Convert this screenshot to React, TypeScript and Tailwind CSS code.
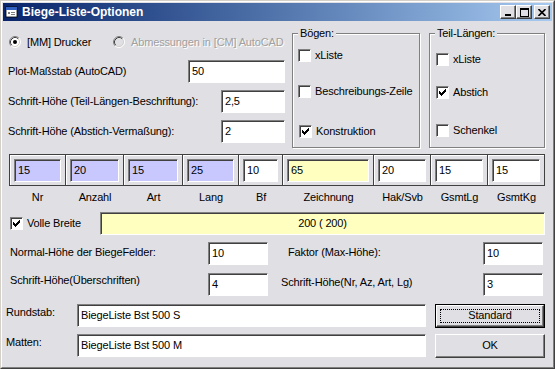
import React from "react";

const raised =
  "border border-t-white border-l-white border-r-[#404040] border-b-[#404040] shadow-[inset_-1px_-1px_0_#808080]";
const sunken =
  "border border-t-[#808080] border-l-[#808080] border-r-white border-b-white shadow-[inset_1px_1px_0_#404040]";

const checkPixels = [
  [6, 0], [5, 1], [6, 1], [0, 2], [4, 2], [5, 2], [6, 2], [0, 3], [1, 3], [3, 3], [4, 3], [5, 3],
  [0, 4], [1, 4], [2, 4], [3, 4], [4, 4], [1, 5], [2, 5], [3, 5], [2, 6],
];

function CheckBox({ checked }: { checked?: boolean }) {
  return (
    <span className={`flex h-[13px] w-[13px] shrink-0 items-center justify-center bg-white ${sunken}`}>
      {checked && (
        <svg width="7" height="7" viewBox="0 0 7 7" shapeRendering="crispEdges">
          {checkPixels.map(([x, y]) => (
            <rect key={`${x}-${y}`} x={x} y={y} width="1" height="1" fill="#000" />
          ))}
        </svg>
      )}
    </span>
  );
}

function Check({ label, checked }: { label: string; checked?: boolean }) {
  return (
    <div className="flex h-[13px] items-center gap-[4px] whitespace-nowrap">
      <CheckBox checked={checked} />
      <span>{label}</span>
    </div>
  );
}

function Radio({ checked, disabled }: { checked?: boolean; disabled?: boolean }) {
  return (
    <svg width="12" height="12" viewBox="0 0 12 12" className="shrink-0">
      <circle cx="6" cy="6" r="5" fill={disabled ? "#e0dfe3" : "#fff"} />
      <path d="M2.11 9.89 A5.5 5.5 0 0 1 9.89 2.11" stroke="#808080" fill="none" />
      <path d="M9.89 2.11 A5.5 5.5 0 0 1 2.11 9.89" stroke="#fff" fill="none" />
      <path d="M2.82 9.18 A4.5 4.5 0 0 1 9.18 2.82" stroke="#404040" fill="none" />
      <path d="M9.18 2.82 A4.5 4.5 0 0 1 2.82 9.18" stroke="#d4d0c8" fill="none" />
      {checked && <circle cx="6" cy="6" r="2" fill="#000" />}
    </svg>
  );
}

function Field({ value, className }: { value: string; className: string }) {
  return (
    <div className={`flex h-[23px] shrink-0 items-center pl-[3px] ${sunken} ${className}`}>{value}</div>
  );
}

function Group({ title, className, children }: { title: string; className: string; children: React.ReactNode }) {
  return (
    <div
      className={`relative h-[115px] border border-[#808080] shadow-[inset_1px_1px_0_#fff,1px_1px_0_#fff] ${className}`}
    >
      <span className="absolute -top-[8px] left-[5px] bg-[#e0dfe3] px-[2px] leading-[14px]">{title}</span>
      {children}
    </div>
  );
}

const cells = [
  { label: "Nr", value: "15", w: "w-[57px]", bg: "bg-[#c8c8ff]" },
  { label: "Anzahl", value: "20", w: "w-[58px]", bg: "bg-[#c8c8ff]" },
  { label: "Art", value: "15", w: "w-[59px]", bg: "bg-[#c8c8ff]" },
  { label: "Lang", value: "25", w: "w-[56px]", bg: "bg-[#c8c8ff]" },
  { label: "Bf", value: "10", w: "w-[44px]", bg: "bg-white" },
  { label: "Zeichnung", value: "65", w: "w-[91px]", bg: "bg-[#ffffc0]" },
  { label: "Hak/Svb", value: "20", w: "w-[57px]", bg: "bg-white" },
  { label: "GsmtLg", value: "15", w: "w-[57px]", bg: "bg-white" },
  { label: "GsmtKg", value: "15", w: "w-[57px]", bg: "bg-white" },
];

function TitleButton({ children }: { children: React.ReactNode }) {
  return (
    <div className={`flex h-[14px] w-[16px] items-center justify-center bg-[#e0dfe3] ${raised}`}>{children}</div>
  );
}

function TitleBar() {
  return (
    <div className="flex h-[18px] shrink-0 items-center bg-gradient-to-r from-[#0a246a] to-[#a6caf0] pl-[2px] pr-[2px]">
      <svg width="14" height="14" viewBox="0 0 14 14" className="shrink-0">
        <rect x="1" y="2" width="11" height="10" fill="#fff" stroke="#000" strokeWidth="0.8" />
        <rect x="1" y="2" width="11" height="3" fill="#3060c0" />
        <rect x="3" y="7" width="2" height="2" fill="#808080" />
        <rect x="6" y="7" width="4" height="1" fill="#808080" />
        <rect x="6" y="9" width="4" height="1" fill="#808080" />
      </svg>
      <span className="ml-[3px] text-[12px] font-bold tracking-normal text-white">Biege-Liste-Optionen</span>
      <div className="ml-auto flex items-center">
        <TitleButton>
          <svg width="8" height="8" viewBox="0 0 8 8" shapeRendering="crispEdges">
            <rect x="1" y="6" width="6" height="2" fill="#000" />
          </svg>
        </TitleButton>
        <TitleButton>
          <svg width="9" height="9" viewBox="0 0 9 9" shapeRendering="crispEdges">
            <rect x="0.5" y="0.5" width="8" height="8" fill="none" stroke="#000" />
            <rect x="0" y="1" width="9" height="1" fill="#000" />
          </svg>
        </TitleButton>
        <div className="ml-[2px]">
          <TitleButton>
            <svg width="8" height="7" viewBox="0 0 8 7">
              <path d="M0.5 0 L7.5 7 M7.5 0 L0.5 7" stroke="#000" strokeWidth="1.6" />
            </svg>
          </TitleButton>
        </div>
      </div>
    </div>
  );
}

export default function App() {
  return (
    <div className="h-[369px] w-[555px] border border-t-[#d4d0c8] border-l-[#d4d0c8] border-r-[#404040] border-b-[#404040] bg-[#e0dfe3] font-['Liberation_Sans',Arial,sans-serif] text-[11px] leading-[13px] tracking-[-0.15px] text-black">
      <div className="flex h-full flex-col border border-t-white border-l-white border-r-[#808080] border-b-[#808080] p-px">
        <TitleBar />

        <div className="flex flex-col">
          {/* top section */}
          <div className="mt-[12px] flex h-[115px]">
            <div className="flex w-[282px] flex-col">
              <div className="mt-[2px] flex h-[14px] items-center whitespace-nowrap pl-[6px]">
                <div className="flex w-[104px] items-center gap-[6px]">
                  <Radio checked />
                  <span>[MM] Drucker</span>
                </div>
                <div className="flex items-center gap-[6px]">
                  <Radio disabled />
                  <span className="text-[#a0a0a0] [text-shadow:1px_1px_0_#fff]">Abmessungen in [CM] AutoCAD</span>
                </div>
              </div>
              <div className="mt-[11px] flex h-[23px] items-center justify-between pl-[5px]">
                <span>Plot-Maßstab (AutoCAD)</span>
                <Field value="50" className="w-[97px] bg-white" />
              </div>
              <div className="mt-[7px] flex h-[23px] items-center justify-between pl-[5px]">
                <span>Schrift-Höhe (Teil-Längen-Beschriftung):</span>
                <Field value="2,5" className="w-[64px] bg-white" />
              </div>
              <div className="mt-[7px] flex h-[23px] items-center justify-between pl-[5px]">
                <span>Schrift-Höhe (Abstich-Vermaßung):</span>
                <Field value="2" className="w-[64px] bg-white" />
              </div>
            </div>

            <Group title="Bögen:" className="ml-[7px] w-[128px]">
              <div className="flex flex-col pl-[5px]">
                <div className="mt-[15px]">
                  <Check label="xListe" />
                </div>
                <div className="mt-[23px]">
                  <Check label="Beschreibungs-Zeile" />
                </div>
                <div className="mt-[27px] pl-[1px]">
                  <Check label="Konstruktion" checked />
                </div>
              </div>
            </Group>

            <Group title="Teil-Längen:" className="ml-[9px] w-[116px]">
              <div className="flex flex-col pl-[6px]">
                <div className="mt-[19px]">
                  <Check label="xListe" />
                </div>
                <div className="mt-[20px]">
                  <Check label="Abstich" checked />
                </div>
                <div className="mt-[25px]">
                  <Check label="Schenkel" />
                </div>
              </div>
            </Group>
          </div>

          {/* column cells */}
          <div className="mt-[6px] flex pl-[6px]">
            {cells.map((c, i) => (
              <div key={c.label} className={`flex flex-col ${c.w}`}>
                <div
                  className={`flex h-[32px] items-center border-y border-r border-[#404040] px-[4px] shadow-[inset_1px_1px_0_#fff] ${
                    i === 0 ? "border-l" : ""
                  }`}
                >
                  <Field value={c.value} className={`flex-1 ${c.bg}`} />
                </div>
                <div className="mt-[5px] h-[13px] text-center">{c.label}</div>
              </div>
            ))}
          </div>

          {/* Volle Breite */}
          <div className="mt-[8px] flex h-[23px] items-center pl-[7px]">
            <div className="w-[90px]">
              <Check label="Volle Breite" checked />
            </div>
            <div className={`flex h-[23px] w-[445px] items-center justify-center bg-[#ffffc0] ${sunken}`}>
              200 ( 200)
            </div>
          </div>

          <div className="mt-[7px] flex h-[23px] pl-[7px]">
            <div className="flex w-[258px] items-center justify-between">
              <span className="-mt-[2px]">Normal-Höhe der BiegeFelder:</span>
              <Field value="10" className="w-[60px] bg-white" />
            </div>
            <div className="ml-[13px] flex w-[262px] items-center justify-between">
              <span className="-mt-[2px] pl-[7px]">Faktor (Max-Höhe):</span>
              <Field value="10" className="w-[60px] bg-white" />
            </div>
          </div>

          <div className="mt-[8px] flex h-[23px] pl-[7px]">
            <div className="flex w-[258px] items-center justify-between">
              <span className="-mt-[8px]">Schrift-Höhe(Überschriften)</span>
              <Field value="4" className="w-[60px] bg-white" />
            </div>
            <div className="ml-[13px] flex w-[262px] items-center justify-between">
              <span className="-mt-[4px]">Schrift-Höhe(Nr, Az, Art, Lg)</span>
              <Field value="3" className="w-[60px] bg-white" />
            </div>
          </div>

          <div className="mt-[8px] flex h-[23px] items-center pl-[3px]">
            <span className="-mt-[6px] w-[71px]">Rundstab:</span>
            <Field value="BiegeListe Bst 500 S" className="w-[349px] bg-white" />
            <div className="ml-[9px] flex h-[24px] w-[110px] border border-black">
              <div className={`flex flex-1 p-[3px] bg-[#e0dfe3] ${raised}`}>
                <div className="flex flex-1 items-center justify-center border border-dotted border-black">
                  Standard
                </div>
              </div>
            </div>
          </div>

          <div className="mt-[7px] flex h-[23px] items-center pl-[3px]">
            <span className="-mt-[6px] w-[71px]">Matten:</span>
            <Field value="BiegeListe Bst 500 M" className="w-[349px] bg-white" />
            <div className={`ml-[9px] flex h-[24px] w-[110px] items-center justify-center bg-[#e0dfe3] ${raised}`}>
              OK
            </div>
          </div>
        </div>
      </div>
    </div>
  );
}
